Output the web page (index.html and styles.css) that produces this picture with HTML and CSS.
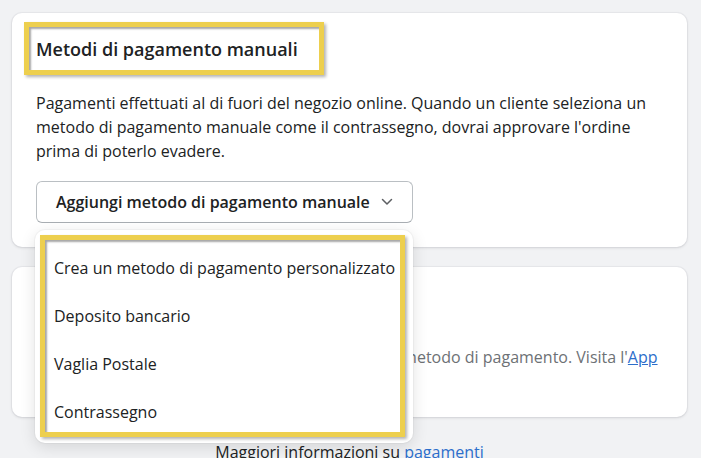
FILE: index.html
```html
<!DOCTYPE html>
<html lang="it">
  <head>
    <meta charset="UTF-8" />
    <title>Pagamenti</title>
    <link rel="stylesheet" href="styles.css">
  </head>
  <body>
    <div class="page">
      <!-- Metodi manuali -->
      <section class="card">
        <div class="mark heading-mark">
          <h2>Metodi di pagamento manuali</h2>
        </div>
        <p class="card-text">Pagamenti effettuati al di fuori del negozio online. Quando un cliente seleziona un metodo di pagamento manuale come il contrassegno, dovrai approvare l'ordine prima di poterlo evadere.</p>

        <div class="picker">
          <button class="picker-btn">
            Aggiungi metodo di pagamento manuale
            <svg class="chevron" width="12" height="8" viewBox="0 0 12 8">
              <path d="M1.5 1.5 6 6l4.5-4.5" fill="none" stroke="#5c5f62" stroke-width="1.5" stroke-linecap="round" stroke-linejoin="round"/>
            </svg>
          </button>

          <div class="popover">
            <ul class="mark menu">
              <li>Crea un metodo di pagamento personalizzato</li>
              <li>Deposito bancario</li>
              <li>Vaglia Postale</li>
              <li>Contrassegno</li>
            </ul>
          </div>
        </div>
      </section>

      <!-- Metodi supportati -->
      <section class="card">
        <h3>Metodi di pagamento supportati</h3>
        <p class="card-text muted">Puoi aggiungere provider installando app con un metodo di pagamento. Visita l'<a href="#">App Store</a> per saperne di più.</p>
      </section>

      <p class="help">Maggiori informazioni su <a href="#">pagamenti</a></p>
    </div>
  </body>
</html>
```

FILE: styles.css
```css
:root {
  --bg: #f1f2f4;
  --text: #202223;
  --muted: #6d7175;
  --link: #2c6ecb;
  --mark: #edcf4e;
  --radius: 10px;
}

* {
  margin: 0;
  padding: 0;
  box-sizing: border-box;
}

body {
  background-color: var(--bg);
  color: var(--text);
  font-family: 'Open Sans', 'Noto Sans', sans-serif;
  font-size: 16px;
  line-height: 24px;
  overflow: hidden;
}

.page {
  padding: 13px 14px 0 12px;
}

.card {
  background-color: white;
  border-radius: var(--radius);
  box-shadow: 0 0 0 1px rgba(63, 63, 68, 0.04), 0 1px 3px rgba(63, 63, 68, 0.15);
  padding: 9px 24px 24px;
  margin-bottom: 20px;
}

/* riquadro giallo di evidenziazione */
.mark {
  border: 5px solid var(--mark);
  box-shadow: inset 2px 2px 2px rgba(0, 0, 0, 0.35), 2px 2px 3px rgba(0, 0, 0, 0.3);
}

.heading-mark {
  width: fit-content;
  margin-left: -12px;
  padding: 0 21px 0 7px;
  height: 53px;
  display: flex;
  align-items: center;
}

h2 {
  font-size: 18px;
  font-weight: 600;
}

.card-text {
  margin-top: 16px;
}

.picker {
  position: relative;
  margin-top: 18px;
  width: fit-content;
}

.picker-btn {
  display: flex;
  align-items: center;
  gap: 11px;
  height: 42px;
  padding: 0 19px 0 19px;
  background: white;
  border: 1px solid #babfc3;
  border-bottom-color: #a9aeb3;
  border-radius: 6px;
  font-family: inherit;
  font-size: 16px;
  font-weight: 600;
  color: var(--text);
}

.popover {
  position: absolute;
  top: 49px;
  left: -1px;
  width: 378px;
  padding: 5px 8px 6px 5px;
  background: white;
  border-radius: var(--radius);
  box-shadow: 0 4px 16px rgba(0, 0, 0, 0.12), 0 0 0 1px rgba(0, 0, 0, 0.03);
  z-index: 2;
}

.menu {
  list-style: none;
  padding: 4px 0 0 9px;
  height: 202px;
}

.menu li {
  height: 48px;
  line-height: 48px;
  white-space: nowrap;
}

h3 {
  font-size: 17px;
  font-weight: 600;
  margin-top: 15px;
}

.muted {
  color: var(--muted);
  margin-top: 30px;
}

a {
  color: var(--link);
}

.help {
  text-align: center;
  margin-top: 23px;
}

.help a {
  text-decoration: none;
}
```
